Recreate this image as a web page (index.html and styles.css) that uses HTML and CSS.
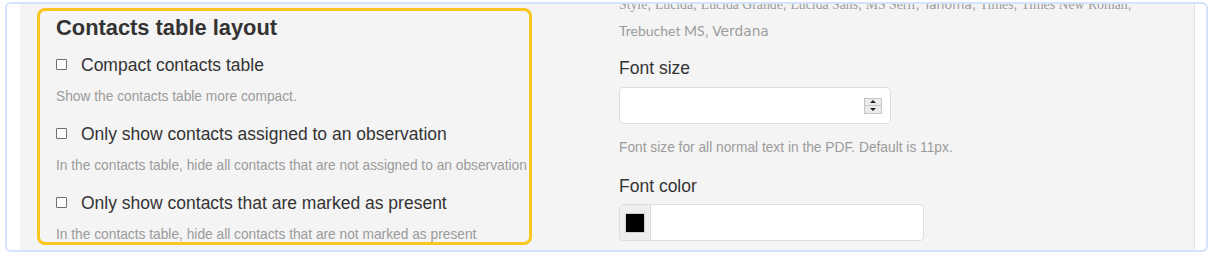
FILE: index.html
```html
<!DOCTYPE html>
<html lang="en">
<head>
<meta charset="utf-8">
<title>Settings</title>
<link rel="stylesheet" href="styles.css">
</head>
<body>
<div class="frame">
  <div class="panel">
    <section class="highlight">
      <h2 class="title">Contacts table layout</h2>
      <div class="option">
        <label class="check"><input type="checkbox"><span>Compact contacts table</span></label>
        <p class="help">Show the contacts table more compact.</p>
      </div>
      <div class="option">
        <label class="check"><input type="checkbox"><span>Only show contacts assigned to an observation</span></label>
        <p class="help">In the contacts table, hide all contacts that are not assigned to an observation</p>
      </div>
      <div class="option">
        <label class="check"><input type="checkbox"><span>Only show contacts that are marked as present</span></label>
        <p class="help">In the contacts table, hide all contacts that are not marked as present</p>
      </div>
    </section>
    <section class="settings">
      <p class="help fonts"><span class="f-serif">Style</span>, <span class="f-serif">Lucida</span>, <span class="f-serif">Lucida Grande</span>, <span class="f-serif">Lucida Sans</span>, <span class="f-serif">MS Serif</span>, <span class="f-tahoma">Tahoma</span>, <span class="f-serif">Times</span>, <span class="f-serif">Times New Roman</span>,<br><span class="f-trebuchet">Trebuchet MS</span>, <span class="f-verdana">Verdana</span></p>
      <label class="field-label">Font size</label>
      <div class="number-input">
        <span class="spinner"><span class="spin-up"></span><span class="spin-down"></span></span>
      </div>
      <p class="help">Font size for all normal text in the PDF. Default is 11px.</p>
      <label class="field-label label-color">Font color</label>
      <div class="color-input">
        <span class="swatch-box"><span class="swatch"></span></span>
        <span class="color-value"></span>
      </div>
    </section>
  </div>
</div>
</body>
</html>
```
FILE: styles.css
```css
* {
  box-sizing: border-box;
}

body {
  margin: 0;
  background: #ffffff;
  font-family: "Liberation Sans", Arial, sans-serif;
}

.frame {
  margin: 2px 0 0 5px;
  width: 1203px;
  height: 250px;
  border: 2px solid #d3e3fb;
  border-radius: 6px;
  padding: 0 11px 0 13px;
  background: #ffffff;
  overflow: hidden;
}

.panel {
  height: 100%;
  background: #f4f4f4;
  border-right: 1px solid #e4e4e4;
  display: flex;
  align-items: flex-start;
  padding-left: 17px;
}

.highlight {
  flex: none;
  width: 495px;
  height: 237px;
  margin-top: 4px;
  border: 3px solid #f8c61d;
  border-radius: 8px;
  padding: 3px 16px 0;
  overflow: hidden;
}

.title {
  margin: 0 0 12px;
  font-size: 21.875px;
  line-height: 27px;
  font-weight: 700;
  color: #333333;
}

.option + .option {
  margin-top: 15px;
}

.check {
  display: flex;
  align-items: center;
  height: 25px;
  font-size: 17.5px;
  line-height: 25px;
  color: #333333;
  white-space: nowrap;
}

.check input {
  appearance: none;
  -webkit-appearance: none;
  flex: none;
  width: 11px;
  height: 11px;
  margin: -2px 14px 0 0;
  border: 1px solid #6f6f6f;
  border-radius: 1px;
  background: #ffffff;
}

.help {
  margin: 9px 0 0;
  font-size: 13.75px;
  line-height: 20px;
  color: #9b9b9b;
  white-space: nowrap;
}

.settings {
  flex: none;
  margin-left: 87px;
  width: 560px;
}

.fonts {
  margin: -12px 0 0;
  line-height: 25.5px;
}

.f-serif {
  font-family: "Liberation Serif", "Times New Roman", serif;
}

.f-tahoma {
  font-family: "DejaVu Sans", sans-serif;
  font-size: 12.5px;
}

.f-trebuchet {
  font-family: Lato, sans-serif;
  font-size: 14px;
}

.f-verdana {
  font-family: "DejaVu Sans", Verdana, sans-serif;
}

.field-label {
  display: block;
  margin-top: 12px;
  font-size: 17.5px;
  line-height: 25px;
  color: #333333;
}

.label-color {
  margin-top: 16px;
}

.settings .help {
  margin-top: 14px;
}

.settings .fonts {
  margin-top: -12px;
}

.number-input {
  margin-top: 6px;
  width: 272px;
  height: 37px;
  border: 1px solid #dddddd;
  border-radius: 4px;
  background: #ffffff;
  display: flex;
  align-items: center;
  justify-content: flex-end;
  padding-right: 8px;
}

.spinner {
  width: 18px;
  height: 16px;
  display: flex;
  flex-direction: column;
  border: 1px solid #c6c6c6;
  background: #ebebeb;
}

.spinner span {
  flex: 1;
  display: flex;
  align-items: center;
  justify-content: center;
}

.spin-down {
  border-top: 1px solid #c6c6c6;
}

.spin-up::before,
.spin-down::before {
  content: "";
  border-left: 3px solid transparent;
  border-right: 3px solid transparent;
}

.spin-up::before {
  border-bottom: 3px solid #222222;
}

.spin-down::before {
  border-top: 3px solid #222222;
}

.color-input {
  margin-top: 5px;
  width: 305px;
  height: 37px;
  display: flex;
  border: 1px solid #dddddd;
  border-radius: 4px;
  background: #ffffff;
  overflow: hidden;
}

.swatch-box {
  flex: none;
  width: 31px;
  background: #eeeeee;
  border-right: 1px solid #dddddd;
  display: flex;
  align-items: center;
  justify-content: center;
}

.swatch {
  width: 20px;
  height: 20px;
  background: #000000;
  border: 1px solid #d0d0d0;
}

.color-value {
  flex: 1;
}
```
